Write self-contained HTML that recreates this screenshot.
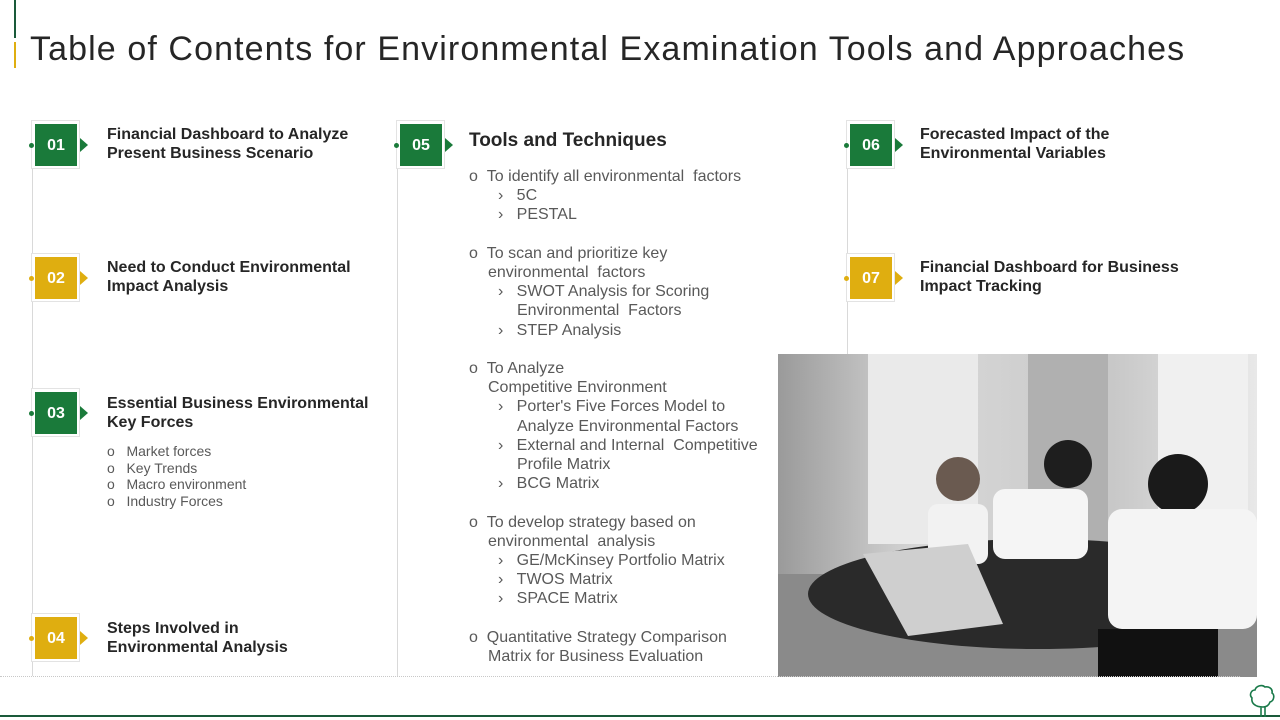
<!DOCTYPE html>
<html><head><meta charset="utf-8"><style>
*{margin:0;padding:0;box-sizing:border-box}
body{width:1280px;height:720px;position:relative;background:#fff;font-family:"Liberation Sans",sans-serif;overflow:hidden}
.a{position:absolute}
.title{left:30px;top:30px;font-size:34px;color:#262626;letter-spacing:1.1px;white-space:nowrap}
.vl{position:absolute;width:1px;background:#d9d9d9}
.box{position:absolute;width:49px;height:49px;border:1px solid #e3e3e3;background:#fff}
.box .sq{position:absolute;left:3px;top:3px;width:42px;height:42px;color:#fff;font-weight:bold;font-size:16px;text-align:center;line-height:44px}
.box .tri{position:absolute;left:48px;top:17px;width:0;height:0;border-top:7px solid transparent;border-bottom:7px solid transparent}
.box .dot{position:absolute;left:-3px;top:22px;width:5px;height:5px;border-radius:50%}
.g .sq{background:#1a7a3a}.g .tri{border-left:8px solid #1a7a3a}.g .dot{background:#1a7a3a}
.y .sq{background:#dfae10}.y .tri{border-left:8px solid #dfae10}.y .dot{background:#dfae10}
.h{position:absolute;font-weight:bold;font-size:16px;color:#262626;line-height:19px}
.t{position:absolute;font-size:16px;color:#595959;line-height:19.2px;white-space:nowrap}
.s{position:absolute;font-size:14px;color:#595959;line-height:16.6px}
</style></head><body>
<div class="a" style="left:14px;top:0;width:2px;height:38px;background:#1a5a3a"></div>
<div class="a" style="left:14px;top:42px;width:2px;height:26px;background:#dfae10"></div>
<div class="a title">Table of Contents for Environmental Examination Tools and Approaches</div>

<div class="vl" style="left:32px;top:168px;height:508px"></div>
<div class="vl" style="left:397px;top:168px;height:508px"></div>
<div class="vl" style="left:847px;top:168px;height:186px"></div>

<div class="box g" style="left:31px;top:120px"><div class="dot"></div><div class="sq">01</div><div class="tri"></div></div>
<div class="h" style="left:107px;top:125px">Financial Dashboard to Analyze<br>Present Business Scenario</div>
<div class="box y" style="left:31px;top:253px"><div class="dot"></div><div class="sq">02</div><div class="tri"></div></div>
<div class="h" style="left:107px;top:258px">Need to Conduct Environmental<br>Impact Analysis</div>
<div class="box g" style="left:31px;top:388px"><div class="dot"></div><div class="sq">03</div><div class="tri"></div></div>
<div class="h" style="left:107px;top:394px">Essential Business Environmental<br>Key Forces</div>
<div class="s" style="left:107px;top:443px">o&nbsp;&nbsp;&nbsp;Market forces<br>o&nbsp;&nbsp;&nbsp;Key Trends<br>o&nbsp;&nbsp;&nbsp;Macro environment<br>o&nbsp;&nbsp;&nbsp;Industry Forces</div>
<div class="box y" style="left:31px;top:613px"><div class="dot"></div><div class="sq">04</div><div class="tri"></div></div>
<div class="h" style="left:107px;top:619px">Steps Involved in<br>Environmental Analysis</div>

<div class="box g" style="left:396px;top:120px"><div class="dot"></div><div class="sq">05</div><div class="tri"></div></div>
<div class="h" style="left:469px;top:131px;font-size:19px">Tools and Techniques</div>
<div class="t" style="left:469px;top:167px">o&nbsp;&nbsp;To identify all environmental&nbsp; factors<br>
<span style="padding-left:29px">›&nbsp;&nbsp;&nbsp;5C</span><br><span style="padding-left:29px">›&nbsp;&nbsp;&nbsp;PESTAL</span><br><br>
o&nbsp;&nbsp;To scan and prioritize key<br><span style="padding-left:19px">environmental&nbsp; factors</span><br>
<span style="padding-left:29px">›&nbsp;&nbsp;&nbsp;SWOT Analysis for Scoring</span><br><span style="padding-left:48px">Environmental&nbsp; Factors</span><br>
<span style="padding-left:29px">›&nbsp;&nbsp;&nbsp;STEP Analysis</span><br><br>
o&nbsp;&nbsp;To Analyze<br><span style="padding-left:19px">Competitive Environment</span><br>
<span style="padding-left:29px">›&nbsp;&nbsp;&nbsp;Porter's Five Forces Model to</span><br><span style="padding-left:48px">Analyze Environmental Factors</span><br>
<span style="padding-left:29px">›&nbsp;&nbsp;&nbsp;External and Internal&nbsp; Competitive</span><br><span style="padding-left:48px">Profile Matrix</span><br>
<span style="padding-left:29px">›&nbsp;&nbsp;&nbsp;BCG Matrix</span><br><br>
o&nbsp;&nbsp;To develop strategy based on<br><span style="padding-left:19px">environmental&nbsp; analysis</span><br>
<span style="padding-left:29px">›&nbsp;&nbsp;&nbsp;GE/McKinsey Portfolio Matrix</span><br>
<span style="padding-left:29px">›&nbsp;&nbsp;&nbsp;TWOS Matrix</span><br>
<span style="padding-left:29px">›&nbsp;&nbsp;&nbsp;SPACE Matrix</span><br><br>
o&nbsp;&nbsp;Quantitative Strategy Comparison<br><span style="padding-left:19px">Matrix for Business Evaluation</span></div>

<div class="box g" style="left:846px;top:120px"><div class="dot"></div><div class="sq">06</div><div class="tri"></div></div>
<div class="h" style="left:920px;top:125px">Forecasted Impact of the<br>Environmental Variables</div>
<div class="box y" style="left:846px;top:253px"><div class="dot"></div><div class="sq">07</div><div class="tri"></div></div>
<div class="h" style="left:920px;top:258px">Financial Dashboard for Business<br>Impact Tracking</div>

<svg class="a" style="left:778px;top:354px" width="479" height="323" viewBox="0 0 479 323">
<defs><linearGradient id="bg" x1="0" y1="0" x2="1" y2="0"><stop offset="0" stop-color="#9a9a9a"/><stop offset="0.3" stop-color="#d8d8d8"/><stop offset="0.7" stop-color="#c8c8c8"/><stop offset="1" stop-color="#e8e8e8"/></linearGradient></defs>
<rect width="479" height="323" fill="url(#bg)"/>
<rect x="90" y="0" width="110" height="190" fill="#eaeaea"/>
<rect x="250" y="0" width="80" height="200" fill="#b0b0b0"/>
<rect x="380" y="0" width="90" height="170" fill="#f0f0f0"/>
<rect x="0" y="220" width="479" height="103" fill="#8a8a8a"/>
<ellipse cx="260" cy="240" rx="230" ry="55" fill="#2a2a2a"/>
<circle cx="180" cy="125" r="22" fill="#6a5a50"/>
<rect x="150" y="150" width="60" height="60" rx="10" fill="#f2f2f2"/>
<circle cx="290" cy="110" r="24" fill="#1e1e1e"/>
<rect x="215" y="135" width="95" height="70" rx="12" fill="#f5f5f5"/>
<circle cx="400" cy="130" r="30" fill="#1a1a1a"/>
<rect x="330" y="155" width="149" height="120" rx="14" fill="#f4f4f4"/>
<polygon points="85,200 190,190 225,270 130,282" fill="#cfcfcf"/>
<rect x="320" y="275" width="120" height="48" fill="#111"/>
</svg>

<div class="a" style="left:0;top:676px;width:1240px;border-top:1px dotted #c8c8c8"></div>
<div class="a" style="left:0;top:715px;width:1280px;height:2px;background:#1a5a3a"></div>
<svg class="a" style="left:1248px;top:683px" width="30" height="36" viewBox="0 0 30 36"><path d="M13 34V24M17 34V24M15 24c-8 0-12-4-11-9-3-3-1-8 3-8 1-4 7-6 10-3 4-1 8 2 7 6 3 2 2 8-2 9-1 3-3 5-7 5z" fill="none" stroke="#1a7a4a" stroke-width="1.6"/></svg>
</body></html>
